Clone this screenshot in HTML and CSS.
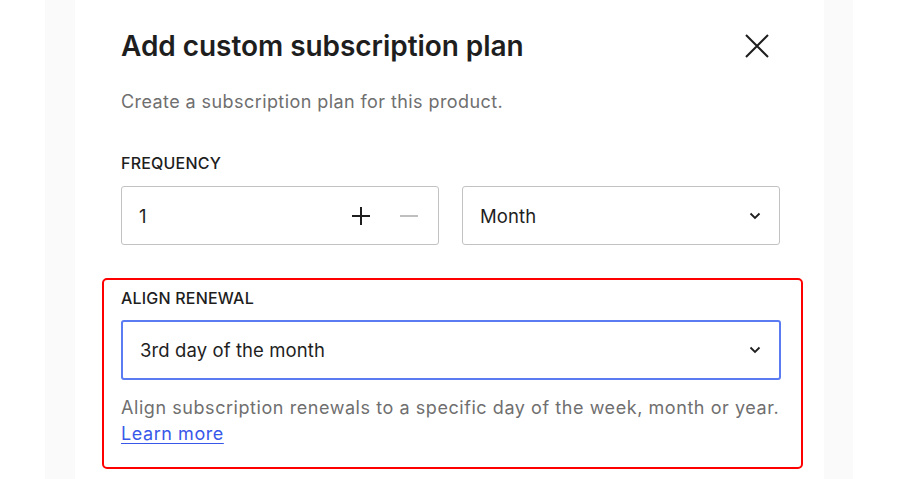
FILE: index.html
```html
<!DOCTYPE html>
<html lang="en">
<head>
<meta charset="utf-8">
<title>Add custom subscription plan</title>
<link rel="stylesheet" href="styles.css">
</head>
<body>
<div class="page">
  <div class="gutter"></div>
  <div class="strip"></div>
  <div class="panel">
    <div class="header">
      <h1 class="title">Add custom subscription plan</h1>
      <button class="close" aria-label="Close">
        <svg width="24" height="24" viewBox="0 0 24 24"><path d="M1 1 L23 23 M23 1 L1 23" stroke="#1e1e1e" stroke-width="2" fill="none"/></svg>
      </button>
    </div>
    <p class="subtitle">Create a subscription plan for this product.</p>
    <div class="label">Frequency</div>
    <div class="fields">
      <div class="input">
        <span class="value">1</span>
        <div class="steppers">
          <svg class="plus" width="18" height="18" viewBox="0 0 18 18"><path d="M9 0 V18 M0 9 H18" stroke="#1e1e1e" stroke-width="2" fill="none"/></svg>
          <svg class="minus" width="18" height="18" viewBox="0 0 18 18"><path d="M0 9 H18" stroke="#b0b0b0" stroke-width="1.6" fill="none"/></svg>
        </div>
      </div>
      <div class="input">
        <span class="value">Month</span>
        <svg class="chevron" width="12" height="8" viewBox="0 0 12 8"><path d="M1.5 1.5 L6 6 L10.5 1.5" stroke="#1e1e1e" stroke-width="1.8" fill="none"/></svg>
      </div>
    </div>
    <div class="highlight">
      <div class="label">Align renewal</div>
      <div class="input focused">
        <span class="value">3rd day of the month</span>
        <svg class="chevron" width="12" height="8" viewBox="0 0 12 8"><path d="M1.5 1.5 L6 6 L10.5 1.5" stroke="#1e1e1e" stroke-width="1.8" fill="none"/></svg>
      </div>
      <p class="help">Align subscription renewals to a specific day of the week, month or year.<br><a href="#" class="link">Learn more</a></p>
    </div>
  </div>
  <div class="strip strip-right"></div>
  <div class="rest"></div>
</div>
</body>
</html>
```
FILE: styles.css
```css
* { box-sizing: border-box; }
html, body { margin: 0; padding: 0; background: #ffffff; }
body {
  font-family: Inter, "Liberation Sans", Arial, sans-serif;
  color: #1e1e1e;
}
.page {
  display: flex;
  height: 479px;
  overflow: hidden;
}
.gutter { width: 45px; flex: none; }
.strip { width: 30px; flex: none; background: #fafafa; }
.strip-right { width: 29px; }
.rest { flex: 1; }
.panel {
  width: 749px;
  flex: none;
  background: #ffffff;
  padding: 30px 43px 0 46px;
}
.header {
  display: flex;
  align-items: center;
  justify-content: space-between;
  padding-right: 12px;
  height: 32px;
}
.title {
  margin: 0;
  font-size: 28px;
  line-height: 32px;
  font-weight: 600;
  letter-spacing: -0.05px;
}
.close {
  border: 0;
  background: none;
  padding: 0;
  width: 24px;
  height: 24px;
  display: flex;
}
.subtitle {
  margin: 28px 0 0;
  font-size: 18px;
  line-height: 24px;
  letter-spacing: 0.42px;
  color: #6f6f6f;
}
.label {
  margin-top: 39px;
  font-size: 16px;
  line-height: 20px;
  font-weight: 500;
  text-transform: uppercase;
  letter-spacing: 0.2px;
}
.fields {
  margin-top: 13px;
  display: grid;
  grid-template-columns: 318px 318px;
  gap: 23px;
}
.input {
  height: 59px;
  border: 1.5px solid #c2c2c2;
  border-radius: 3px;
  display: flex;
  align-items: center;
  justify-content: space-between;
  padding: 0 17px 0 17px;
  font-size: 18.5px;
  letter-spacing: 0.1px;
}
.steppers {
  display: flex;
  align-items: center;
  gap: 30px;
  padding-right: 3px;
}
.chevron { margin-right: 1px; }
.highlight {
  margin: 33px -22px 0 -19px;
  border: 2px solid #ff0000;
  border-radius: 5px;
  padding: 8px 20px 20px 17px;
}
.highlight .label { margin-top: 0; }
.focused {
  margin-top: 12px;
  height: 60px;
  border: 2px solid #5b7bf2;
}
.help {
  margin: 15px 0 0;
  font-size: 18px;
  line-height: 26px;
  letter-spacing: 0.56px;
  color: #6f6f6f;
}
.link {
  color: #3858e9;
  text-decoration: underline;
  text-underline-offset: 3px;
}
```
